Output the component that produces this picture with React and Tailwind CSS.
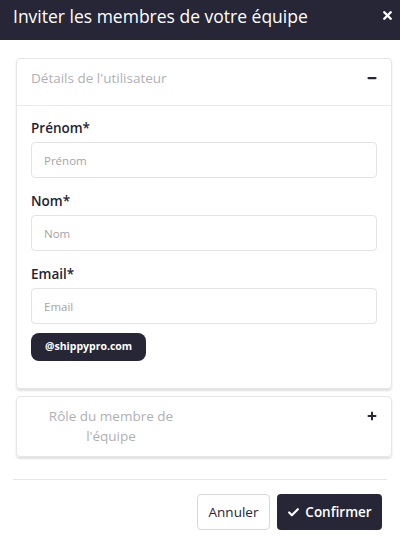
import { Check, Minus, Plus, X } from "lucide-react";

function Field({ label, placeholder }) {
  return (
    <div>
      <label className="block text-[13.5px] leading-[20px] font-semibold text-[#1f2433]">{label}</label>
      <input
        type="text"
        placeholder={placeholder}
        className="mt-[4px] h-[36px] w-full rounded-[4px] border border-[#e3e3e6] px-[12px] text-[11.5px] text-[#333] placeholder:text-[#a4a4a8] outline-none"
      />
    </div>
  );
}

export default function App() {
  return (
    <div
      className="h-[537px] w-[400px] bg-white"
      style={{ fontFamily: "'Open Sans', 'Liberation Sans', sans-serif" }}
    >
      <div className="flex h-[40px] items-start justify-between bg-[#262637] pl-[13px] pr-[6px] pt-[4px]">
        <h2 className="text-[17.5px] leading-[24px] text-white">Inviter les membres de votre équipe</h2>
        <X size={13} strokeWidth={4.5} className="mt-[5px] text-white" />
      </div>

      <div className="pl-[16px] pr-[8px] pt-[18px]">
        <div className="rounded-[4px] border border-[#e6e6e8] shadow-[0_2px_2px_rgba(0,0,0,0.12)]">
          <div className="flex h-[47px] items-start justify-between border-b border-[#ebebed] pl-[14px] pr-[13px] pt-[9px]">
            <span className="text-[13.5px] leading-[20px] text-[#b0b0b4]">Détails de l'utilisateur</span>
            <Minus size={12} strokeWidth={4.5} className="mt-[4px] text-[#262637]" />
          </div>
          <div className="flex flex-col gap-[13px] px-[14px] pt-[12px] pb-[27px]">
            <Field label="Prénom*" placeholder="Prénom" />
            <Field label="Nom*" placeholder="Nom" />
            <div>
              <Field label="Email*" placeholder="Email" />
              <button
                type="button"
                className="mt-[9px] h-[28px] rounded-[8px] bg-[#262637] px-[14px] text-[10.5px] font-bold text-white"
              >
                @shippypro.com
              </button>
            </div>
          </div>
        </div>

        <div className="mt-[7px] flex items-start justify-between rounded-[4px] border border-[#e6e6e8] pt-[9px] pb-[10px] pl-[14px] pr-[13px] shadow-[0_2px_2px_rgba(0,0,0,0.12)]">
          <span className="w-[160px] text-center text-[13.5px] leading-[20px] text-[#b0b0b4]">
            Rôle du membre de l'équipe
          </span>
          <Plus size={12} strokeWidth={4} className="mt-[4px] text-[#262637]" />
        </div>
      </div>

      <div className="mx-[13px] mt-[22px] border-t border-[#e6e6e8]" />

      <div className="flex justify-end gap-[7px] pr-[18px] pt-[14px]">
        <button
          type="button"
          className="h-[36px] w-[73px] rounded-[4px] border border-[#d8d8dc] text-[13.5px] text-[#262637]"
        >
          Annuler
        </button>
        <button
          type="button"
          className="flex h-[36px] w-[105px] items-center justify-center gap-[5px] rounded-[4px] bg-[#262637] text-[13.5px] font-semibold text-white"
        >
          <Check size={13} strokeWidth={4} />
          Confirmer
        </button>
      </div>
    </div>
  );
}
